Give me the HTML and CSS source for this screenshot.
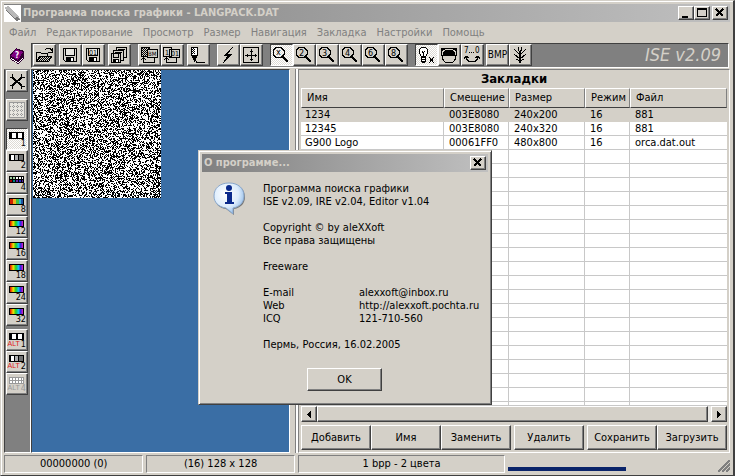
FILE: index.html
```html
<!DOCTYPE html>
<html lang="ru">
<head>
    <meta charset="UTF-8">
    <meta name="viewport" content="width=device-width, initial-scale=1.0">
    <title>Программа поиска графики - LANGPACK.DAT</title>
    <link rel="stylesheet" href="styles.css">
</head>
<body>
    <svg class="defs" aria-hidden="true">
        <defs>
            <symbol id="lens" viewBox="0 0 18 18">
                <path d="M4 1.500h5l3 3v4l-3 3h-5l-3-3v-4z" fill="none" stroke="#000"/>
                <path d="M11 11l5 5" stroke="#000" stroke-width="2"/>
            </symbol>
            <symbol id="disk" viewBox="0 0 16 16">
                <path d="M1.500 1.500h13v13h-11l-2-2z" fill="#d4d0c8" stroke="#000"/>
                <path d="M3.500 1.500v7h9v-7" fill="#e8e6e0" stroke="#000"/>
                <path d="M4 10h8v5h-8z"/>
                <path d="M9 11h2v3h-2z" fill="#fff"/>
            </symbol>
            <linearGradient id="rainbow">
                <stop offset="0" stop-color="#e00000"/>
                <stop offset=".25" stop-color="#f8e000"/>
                <stop offset=".45" stop-color="#20d020"/>
                <stop offset=".65" stop-color="#10c8f0"/>
                <stop offset=".82" stop-color="#3020e0"/>
                <stop offset="1" stop-color="#e020c0"/>
            </linearGradient>
            <symbol id="spectrum" viewBox="0 0 15 7">
                <path d="M0 0h15v7h-15z"/>
                <path d="M1 1h13v5h-13z" fill="url(#rainbow)"/>
            </symbol>
            <symbol id="mono" viewBox="0 0 15 7">
                <path d="M0 0h15v7h-15z"/>
                <path d="M3 1h4v5h-4zM9 1h4v5h-4z" fill="#fff"/>
            </symbol>
            <symbol id="gray" viewBox="0 0 15 7">
                <path d="M0 0h15v7h-15z"/>
                <path d="M2 1h3v5h-3z" fill="#fff"/>
                <path d="M6 1h3v5h-3z" fill="#b0b0b0"/>
                <path d="M10 1h4v5h-4z" fill="#707070"/>
            </symbol>
            <pattern id="dots" width="2" height="2" patternUnits="userSpaceOnUse">
                <path d="M0 0h1v1h-1zM1 1h1v1h-1z"/>
            </pattern>
        </defs>
    </svg>

    <div class="window">
        <header class="titlebar">
            <svg class="app-icon" viewBox="0 0 17 17">
                <path d="M0 0h17v17h-17z" fill="#fff"/>
                <path d="M1 2l3-1 11 10 1 4-4 1-10-10z" fill="#b8b8b8"/>
                <path d="M2 5l9 9" stroke="#777"/>
                <path d="M11 13l2-2 3 4-4 1z" fill="#777"/>
            </svg>
            <h1>Программа поиска графики - LANGPACK.DAT</h1>
            <button class="caption" aria-label="Свернуть"><svg viewBox="0 0 10 10"><path d="M1 8h6v2h-6z"/></svg></button>
            <button class="caption" aria-label="Развернуть"><svg viewBox="0 0 10 10"><path d="M0 0h10v9h-10zM1 2v6h8v-6z" fill-rule="evenodd"/></svg></button>
            <button class="caption close" aria-label="Закрыть"><svg viewBox="0 0 10 10"><path d="M1 1l7 7M8 1l-7 7" stroke="#000" stroke-width="2"/></svg></button>
        </header>

        <nav class="menu">
            <a href="#">Файл</a>
            <a href="#">Редактирование</a>
            <a href="#">Просмотр</a>
            <a href="#">Размер</a>
            <a href="#">Навигация</a>
            <a href="#">Закладка</a>
            <a href="#">Настройки</a>
            <a href="#">Помощь</a>
        </nav>

        <div class="toolrow">
            <button class="help" aria-label="Справка">
                <svg viewBox="0 0 16 16">
                    <path d="M7 0l8 3v7l-6 6-8-5v-5z" fill="#300030"/>
                    <path d="M7 1l7 3-5 8-7-4z" fill="#800080"/>
                    <path d="M2 10l7 4 5-5v1l-5 5-7-4z" fill="#fff"/>
                    <text x="6" y="10" fill="#fff" font-size="8" font-weight="bold">?</text>
                </svg>
            </button>
            <div class="toolbar">
                <div class="group">
                    <button class="tool" aria-label="Открыть"><svg viewBox="0 0 18 18">
                        <path d="M1.500 15.500v-9h4l1 1h6v3" fill="none" stroke="#000"/>
                        <path d="M2 15l3-5h12l-3 5z" fill="url(#dots)" stroke="#000"/>
                        <path d="M10 4l2-2h3l2 3M17 2v4h-4" fill="none" stroke="#000"/>
                    </svg></button>
                </div>
                <div class="group">
                    <button class="tool" aria-label="Сохранить"><svg viewBox="0 0 18 18"><use href="#disk" x="1" y="1" width="16" height="16"/></svg></button>
                    <button class="tool" aria-label="Сохранить данные"><svg viewBox="0 0 18 18">
                        <use href="#disk" x="1" y="1" width="16" height="16"/>
                        <text x="5" y="9" font-size="7">01</text>
                    </svg></button>
                </div>
                <div class="group">
                    <button class="tool" aria-label="Сохранить все"><svg viewBox="0 0 18 18">
                        <path d="M6.500 1.500h10v10h-10z" fill="#d4d0c8" stroke="#000"/>
                        <path d="M3.500 4.500h10v10h-10z" fill="#d4d0c8" stroke="#000"/>
                        <path d="M8 3.500h7M5 6.500h7" stroke="#000"/>
                        <path d="M1.500 7.500h9v9h-9z" fill="#d4d0c8" stroke="#000"/>
                        <path d="M3.500 8v3h5v-3" fill="none" stroke="#000"/>
                        <path d="M3 13h6v4h-6z"/>
                        <path d="M6 14h2v2h-2z" fill="#fff"/>
                    </svg></button>
                </div>
                <div class="group wide">
                    <button class="tool" aria-label="Экспорт BMP"><svg viewBox="0 0 18 18">
                        <path d="M1.500 1.500h8v9h-8z" fill="url(#dots)" stroke="#000"/>
                        <path d="M7.500 3.500h10v8h-10z" fill="#d4d0c8" stroke="#000"/>
                        <text x="8" y="10" font-size="6">BM</text>
                        <path d="M14.500 12v4h-11v-4M1 14l2.500-2.500 2.500 2.500" fill="none" stroke="#000"/>
                    </svg></button>
                    <button class="tool" aria-label="Экспорт данных"><svg viewBox="0 0 18 18">
                        <path d="M.5 1.500h8v9h-8zM6.500 3.500h10v8h-10z" fill="#d4d0c8" stroke="#000"/>
                        <text x="2" y="9" font-size="7">1</text>
                        <text x="8" y="10" font-size="7">01</text>
                        <path d="M13.500 12v4h-10v-4M1 14l2.500-2.500 2.500 2.500" fill="none" stroke="#000"/>
                    </svg></button>
                </div>
                <div class="group">
                    <button class="tool" aria-label="Редактор"><svg viewBox="0 0 18 18">
                        <path d="M2.500 1.500h6v7l-3 6-3-6z" fill="#fff" stroke="#000"/>
                        <path d="M3 2h3v6h-3z" fill="url(#dots)"/>
                        <path d="M3 9h5l-2 6h-1z"/>
                        <path d="M6 14l2 2.500h8" fill="none" stroke="#000"/>
                    </svg></button>
                </div>
                <div class="group wide">
                    <button class="tool" aria-label="Обновить"><svg viewBox="0 0 18 18"><path d="M13 1l-9 9h4l-4 7 10-9h-5l5-7z"/></svg></button>
                    <button class="tool" aria-label="Размер"><svg viewBox="0 0 18 18">
                        <path d="M1.500 1.500h15v15h-15zM9.500 3v12M3 9.500h12M8 5h3M8 13.500h3M5.500 8v3M13.500 8v3" fill="none" stroke="#000"/>
                    </svg></button>
                </div>
                <div class="group wide">
                    <button class="tool on" aria-label="Масштаб x"><svg viewBox="0 0 18 18"><use href="#lens" width="18" height="18"/><text x="4" y="9" font-size="9">x</text></svg></button>
                    <button class="tool" aria-label="Масштаб 2"><svg viewBox="0 0 18 18"><use href="#lens" width="18" height="18"/><text x="4" y="10" font-size="9">2</text></svg></button>
                    <button class="tool" aria-label="Масштаб 3"><svg viewBox="0 0 18 18"><use href="#lens" width="18" height="18"/><text x="4" y="10" font-size="9">3</text></svg></button>
                    <button class="tool" aria-label="Масштаб 4"><svg viewBox="0 0 18 18"><use href="#lens" width="18" height="18"/><text x="4" y="10" font-size="9">4</text></svg></button>
                    <button class="tool" aria-label="Масштаб 6"><svg viewBox="0 0 18 18"><use href="#lens" width="18" height="18"/><text x="4" y="10" font-size="9">6</text></svg></button>
                    <button class="tool" aria-label="Масштаб 8"><svg viewBox="0 0 18 18"><use href="#lens" width="18" height="18"/><text x="4" y="10" font-size="9">8</text></svg></button>
                </div>
                <div class="group wide">
                    <button class="tool on" aria-label="Подсветка"><svg viewBox="0 0 18 18">
                        <path d="M4.500 1.500h4l2 2v4l-2 3h-4l-2-3v-4z" fill="#fff" stroke="#000"/>
                        <path d="M5 5l1.500 2 1.500-2M6.500 7v4" fill="none" stroke="#000"/>
                        <path d="M4 11h5v5h-1v1h-3v-1h-1z"/>
                        <path d="M5 12h3v1h-3zM5 14h3v1h-3z" fill="#fff"/>
                        <path d="M12 11l5 6M17 11l-5 6" stroke="#000"/>
                    </svg></button>
                    <button class="tool" aria-label="Инверсия"><svg viewBox="0 0 18 18">
                        <path d="M1 2h16v8h-16z"/>
                        <path d="M2 9q0-6 7-6t7 6q0 8-7 8t-7-8z" fill="#d4d0c8" stroke="#000"/>
                        <path d="M2 10v-1q0-6 7-6t7 6v1z"/>
                        <path d="M2 9q0-6 7-6t7 6" fill="none" stroke="#d4d0c8"/>
                    </svg></button>
                    <button class="tool" aria-label="Порядок бит"><svg viewBox="0 0 18 18">
                        <text x="1" y="7" font-size="8">7</text>
                        <text x="12" y="7" font-size="8">0</text>
                        <path d="M6 6h1v1h-1zM8 6h1v1h-1zM10 6h1v1h-1z"/>
                        <path d="M3 11q1 5 6 5t6-5M1 13l2-3 3 2M12 12l3-2 2 3" fill="none" stroke="#000"/>
                    </svg></button>
                </div>
                <div class="group tight">
                    <button class="tool bmp">BMP</button>
                    <button class="tool" aria-label="Дерево"><svg viewBox="0 0 18 18">
                        <path d="M9 8v9" stroke="#000" stroke-width="2"/>
                        <path d="M3 3l6 6M15 3l-6 6M7 1l2 7M11 1l-2 7M3 8l6 5 6-5M5 13h1l3 3 3-3h1" fill="none" stroke="#000"/>
                    </svg></button>
                </div>
                <span class="brand">ISE v2.09</span>
            </div>
        </div>

        <main>
            <aside class="modes">
                <button class="tool" aria-label="Настройки"><svg viewBox="0 0 18 18">
                    <path d="M4 5l10 9M4 14l10-9" stroke="#000" stroke-width="2"/>
                    <path d="M4.500 2v3.500h-3M13.500 2v3.500h3M13.500 17v-3h3M1.500 13.500h3v3" fill="none" stroke="#000"/>
                </svg></button>
                <button class="tool gap" aria-label="Сетка" disabled><svg viewBox="0 0 18 18">
                    <path d="M1.500 1.500h15v15h-15z" fill="#e8e6e0" stroke="#999"/>
                    <path d="M5.500 2v14M9.500 2v14M13.500 2v14M2 5.500h14M2 9.500h14M2 13.500h14" stroke="#999" stroke-dasharray="1 1"/>
                </svg></button>
                <button class="tool mode on gap"><svg viewBox="0 0 15 7"><use href="#mono"/></svg><span>1</span></button>
                <button class="tool mode"><svg viewBox="0 0 15 7"><use href="#gray"/></svg><span>2</span></button>
                <button class="tool mode"><svg viewBox="0 0 15 7">
                    <path d="M0 0h15v7h-15z"/>
                    <path d="M1 1h2v2h-2zM4 1h2v2h-2z" fill="#a0d0a0"/>
                    <path d="M7 1h2v2h-2zM10 1h2v2h-2zM13 1h1v2h-1z" fill="#fff"/>
                    <path d="M1 4h2v2h-2z" fill="#a00000"/>
                    <path d="M4 4h2v2h-2z" fill="#008080"/>
                    <path d="M7 4h2v2h-2zM13 4h1v2h-1z" fill="#6020a0"/>
                    <path d="M10 4h2v2h-2z" fill="#2020c0"/>
                </svg><span>4</span></button>
                <button class="tool mode"><svg viewBox="0 0 15 7">
                    <path d="M0 0h15v7h-15z"/>
                    <path d="M1 1h3v5h-3z" fill="#d02000"/>
                    <path d="M4 1h3v5h-3z" fill="#f0b020"/>
                    <path d="M7 1h3v5h-3z" fill="#40c040"/>
                    <path d="M10 1h2v5h-2z" fill="#30b0d0"/>
                    <path d="M12 1h2v5h-2z" fill="#2050a0"/>
                </svg><span>8</span></button>
                <button class="tool mode"><svg viewBox="0 0 15 7"><use href="#spectrum"/></svg><span>12</span></button>
                <button class="tool mode"><svg viewBox="0 0 15 7"><use href="#spectrum"/></svg><span>16</span></button>
                <button class="tool mode"><svg viewBox="0 0 15 7"><use href="#spectrum"/></svg><span>18</span></button>
                <button class="tool mode"><svg viewBox="0 0 15 7"><use href="#spectrum"/></svg><span>24</span></button>
                <button class="tool mode"><svg viewBox="0 0 15 7"><use href="#spectrum"/></svg><span>32</span></button>
                <button class="tool mode small-gap"><svg viewBox="0 0 15 7"><use href="#mono"/></svg><span><b>ALT</b>1</span></button>
                <button class="tool mode"><svg viewBox="0 0 15 7"><use href="#gray"/></svg><span><b>ALT</b>2</span></button>
                <button class="tool mode" disabled><svg viewBox="0 0 15 7">
                    <path d="M0 0h15v7h-15z" fill="#999"/>
                    <path d="M1 1h2v2h-2zM4 1h2v2h-2zM7 1h2v2h-2zM10 1h2v2h-2zM13 1h1v2h-1zM1 4h2v2h-2zM4 4h2v2h-2zM7 4h2v2h-2zM10 4h2v2h-2zM13 4h1v2h-1z" fill="#fff"/>
                </svg><span><b>ALT</b>4</span></button>
            </aside>

            <section class="view">
                <canvas id="bitmap" width="128" height="128"></canvas>
            </section>

            <section class="bookmarks">
                <h2>Закладки</h2>
                <div class="list">
                    <table>
                        <thead>
                            <tr>
                                <th class="name">Имя</th>
                                <th class="offset">Смещение</th>
                                <th class="size">Размер</th>
                                <th class="bits">Режим</th>
                                <th>Файл</th>
                            </tr>
                        </thead>
                        <tbody>
                            <tr class="selected"><td>1234</td><td>003E8080</td><td>240x200</td><td>16</td><td>881</td></tr>
                            <tr><td>12345</td><td>003E8080</td><td>240x320</td><td>16</td><td>881</td></tr>
                            <tr><td>G900 Logo</td><td>00061FF0</td><td>480x800</td><td>16</td><td>orca.dat.out</td></tr>
                            <tr class="empty"><td></td><td></td><td></td><td></td><td></td></tr>
                        </tbody>
                    </table>
                </div>
                <div class="scroll">
                    <button aria-label="Влево"><svg viewBox="0 0 4 7"><path d="M4 0v7l-4-3.500z"/></svg></button>
                    <div class="thumb"></div>
                    <button aria-label="Вправо"><svg viewBox="0 0 4 7"><path d="M0 0v7l4-3.500z"/></svg></button>
                </div>
                <div class="actions">
                    <button>Добавить</button>
                    <button>Имя</button>
                    <button>Заменить</button>
                    <button class="apart">Удалить</button>
                    <button class="apart">Сохранить</button>
                    <button>Загрузить</button>
                </div>
            </section>
        </main>

        <footer class="status">
            <span class="cell address">00000000 (0)</span>
            <span class="cell dims">(16) 128 x 128</span>
            <span class="cell depth">1 bpp - 2 цвета</span>
            <span class="progress"></span>
            <svg class="grip" viewBox="0 0 12 12">
                <path d="M0 12L12 0M4 12l8-8M8 12l4-4" stroke="#808080" stroke-width="2"/>
            </svg>
        </footer>
    </div>

    <div class="dialog" role="dialog" aria-labelledby="about">
        <header class="titlebar">
            <h1 id="about">О программе...</h1>
            <button class="caption" aria-label="Закрыть"><svg viewBox="0 0 10 10"><path d="M1 1l7 7M8 1l-7 7" stroke="#000" stroke-width="2"/></svg></button>
        </header>
        <div class="about">
            <svg class="info" viewBox="0 0 32 34">
                <defs>
                    <radialGradient id="bubble" cx=".4" cy=".35" r=".7">
                        <stop offset="0" stop-color="#fff"/>
                        <stop offset=".6" stop-color="#dcecfc"/>
                        <stop offset="1" stop-color="#88b4e4"/>
                    </radialGradient>
                </defs>
                <path d="M17 2c9 0 15 5 15 13 0 6-4 11-11 12v6l-8-6C5 26 2 21 2 15 2 7 8 2 17 2z" fill="#777"/>
                <path d="M16 1c9 0 15 5 15 13 0 6-4 11-11 12v6l-7-6C5 25 1 20 1 14 1 6 7 1 16 1z" fill="url(#bubble)" stroke="#8aa8cc"/>
                <circle cx="16" cy="6" r="3" fill="#0a2a8c"/>
                <path d="M12 10h7v10h2v2h-9v-2h2v-8h-2z" fill="#0a2a8c"/>
            </svg>
            <div class="info-text">
                <p>Программа поиска графики<br>ISE v2.09, IRE v2.04, Editor v1.04</p>
                <p>Copyright © by aleXXoft<br>Все права защищены</p>
                <p>Freeware</p>
                <dl>
                    <dt>E-mail</dt><dd>alexxoft@inbox.ru</dd>
                    <dt>Web</dt><dd>http://alexxoft.pochta.ru</dd>
                    <dt>ICQ</dt><dd>121-710-560</dd>
                </dl>
                <p>Пермь, Россия, 16.02.2005</p>
            </div>
        </div>
        <button class="ok">OK</button>
    </div>

    <script src="bitmap.js"></script>
</body>
</html>
```
FILE: styles.css
```css
*{
    margin: 0;
    padding: 0;
    box-sizing: border-box;
}
body{
    height: 100vh;
    background: #404040;
    color: #000;
    font: 11px/13px "DejaVu Sans Condensed", "DejaVu Sans", sans-serif;
}
button{
    font: inherit;
    color: inherit;
    background: #d4d0c8;
    border: 1px solid;
    border-color: #fff #404040 #404040 #fff;
    box-shadow: inset -1px -1px #808080;
}
svg{
    display: block;
    shape-rendering: crispEdges;
}
.defs{
    position: absolute;
    width: 0;
    height: 0;
}
.window{
    display: flex;
    flex-direction: column;
    height: 100%;
    padding: 2px 3px 2px 2px;
    background: #d4d0c8;
    border: 1px solid;
    border-color: #d4d0c8 #404040 #404040 #d4d0c8;
    border-width: 1px 2px 1px 1px;
    box-shadow: inset 1px 1px #fff;
}

/* заголовок */
.titlebar{
    display: flex;
    align-items: center;
    height: 18px;
    margin: 1px 0 0 1px;
    padding-right: 2px;
    background: linear-gradient(to right, #808080, #c0c0c0);
}
.titlebar h1{
    flex: 1;
    padding-left: 2px;
    color: #d4d0c8;
    font-size: 11px;
    line-height: 18px;
    white-space: nowrap;
}
.app-icon{
    width: 17px;
    height: 17px;
}
.caption{
    width: 16px;
    height: 14px;
    padding: 1px 2px;
}
.caption svg{
    width: 10px;
    height: 10px;
}
.close{
    margin-left: 2px;
}

/* меню */
.menu{
    display: flex;
    gap: 10px;
    height: 21px;
    padding-left: 6px;
    line-height: 21px;
}
.menu a{
    color: #808080;
    text-decoration: none;
}

/* панель инструментов */
.toolrow{
    display: flex;
    height: 25px;
    margin-right: 1px;
}
.help{
    width: 28px;
    padding: 0 0 0 6px;
    border: none;
    box-shadow: none;
}
.help svg{
    width: 16px;
    height: 16px;
}
.toolbar{
    flex: 1;
    display: flex;
    padding-left: 1px;
    background: #808080;
    border: 1px solid;
    border-color: #404040 #fff #fff #404040;
}
.group{
    display: flex;
    margin-right: 3px;
}
.wide{
    margin-left: 4px;
}
.tight{
    margin-left: -1px;
}
.tool{
    flex: none;
    width: 23px;
    height: 22px;
    padding: 1px;
}
.tool svg{
    width: 18px;
    height: 18px;
}
.on{
    background: repeating-conic-gradient(#fff 0 25%, #dedbd5 0 50%) 0 0 / 2px 2px;
    border-color: #404040 #fff #fff #404040;
    box-shadow: none;
}
.bmp{
    font: 10px/18px "DejaVu Sans Condensed", sans-serif;
    padding: 0;
}
.brand{
    margin-left: auto;
    padding-right: 7px;
    color: #d4d0c8;
    font-size: 18px;
    font-style: italic;
    line-height: 22px;
}

/* рабочая область */
main{
    flex: 1;
    display: flex;
    min-height: 0;
    margin: 1px 0 2px 1px;
}
.modes{
    display: flex;
    flex-direction: column;
    width: 27px;
    padding: 0 0 0 1px;
    background: #808080;
    border: 1px solid;
    border-color: #808080 #fff #fff #404040;
}
.modes .tool{
    width: 22px;
}
.modes .gap{
    margin-top: 7px;
}
.modes .small-gap{
    margin-top: 3px;
}
.mode{
    padding: 0 1px 0 2px;
}
.mode svg{
    width: 15px;
    height: 7px;
}
.mode span{
    display: flex;
    justify-content: flex-end;
    gap: 1px;
    font-size: 9px;
    line-height: 8px;
}
.mode b{
    color: #e02020;
    font: 7px/8px "Liberation Sans", sans-serif;
}
.mode:disabled, .mode:disabled b{
    color: #999;
}
.view{
    flex: 259 1 0;
    padding: 0 0 0 1px;
    background: #3a6ea5;
    border: 1px solid;
    border-color: #404040 #fff #fff #404040;
}
#bitmap{
    display: block;
}
.bookmarks{
    flex: 431 1 0;
    display: flex;
    flex-direction: column;
    margin-left: 8px;
    padding: 0 2px 2px;
    border: 1px solid;
    border-color: #808080 #fff #fff #808080;
    box-shadow: -2px 0 #fff, -3px 0 #808080;
}
.bookmarks h2{
    font-size: 13px;
    line-height: 18px;
    text-align: center;
}
.list{
    flex: 1;
    background: #fff;
}
table{
    width: 100%;
    height: 100%;
    table-layout: fixed;
    border-spacing: 0;
}
th{
    height: 20px;
    padding: 0 0 2px 5px;
    background: #d4d0c8;
    border: 1px solid;
    border-color: #fff #808080 #404040 #fff;
    font-weight: normal;
    text-align: left;
}
td{
    height: 14px;
    padding-left: 5px;
    border: solid #c8c8c8;
    border-width: 0 1px 1px 0;
    line-height: 13px;
}
.name{
    width: 143px;
}
.offset{
    width: 65px;
}
.size{
    width: 76px;
}
.bits{
    width: 45px;
}
td:first-child{
    padding-left: 4px;
}
td:last-child{
    border-right: none;
}
.selected td{
    background: #d4d0c8;
    border-color: #d4d0c8;
}
.empty td{
    height: auto;
    background: repeating-linear-gradient(#fff 0 13px, #c8c8c8 13px 14px);
}
.scroll{
    display: flex;
    height: 16px;
    background: #e9e7e3;
}
.scroll button{
    display: flex;
    align-items: center;
    justify-content: center;
    width: 16px;
}
.scroll svg{
    width: 4px;
    height: 7px;
}
.thumb{
    flex: 1;
    margin-right: 3px;
    background: #d4d0c8;
    border: 1px solid;
    border-color: #fff #404040 #404040 #fff;
    box-shadow: inset -1px -1px #808080;
}
.actions{
    display: flex;
    margin-top: 3px;
}
.actions button{
    flex: 1;
    height: 25px;
}
.actions .apart{
    margin-left: 3px;
}

/* строка состояния */
.status{
    display: flex;
    gap: 3px;
    height: 18px;
    padding-left: 1px;
}
.cell{
    border: 1px solid;
    border-color: #808080 #fff #fff #808080;
    line-height: 16px;
    text-align: center;
}
.address{
    flex: 139 1 0;
}
.dims{
    flex: 148 1 0;
}
.depth{
    flex: 208 1 0;
}
.progress{
    flex: 119 1 0;
    align-self: flex-end;
    height: 4px;
    margin-bottom: 2px;
    background: #0a246a;
}
.grip{
    flex: none;
    width: 12px;
    height: 12px;
    margin: 5px 0 0 89px;
}

/* окно "О программе" */
.dialog{
    position: absolute;
    top: 150px;
    left: 198px;
    width: 294px;
    padding: 2px 3px 13px 2px;
    background: #d4d0c8;
    border: 1px solid;
    border-color: #d4d0c8 #404040 #404040 #d4d0c8;
    box-shadow: inset 1px 1px #fff, inset -1px -1px #808080;
}
.about{
    display: flex;
    padding: 10px 0 0 12px;
}
.info{
    width: 32px;
    height: 34px;
    margin-right: 18px;
    shape-rendering: auto;
}
.info-text p, dl{
    margin-bottom: 13px;
    white-space: nowrap;
}
dl{
    display: grid;
    grid-template-columns: 96px auto;
}
.ok{
    display: block;
    width: 75px;
    height: 23px;
    margin: 4px auto 0;
}
```
FILE: bitmap.js
```js
var oBitmap = document.getElementById('bitmap');
var ctx = oBitmap.getContext('2d');
var seed = 2005;

function random(){
    seed = (seed * 16807) % 2147483647;
    return seed / 2147483647;
}

ctx.fillStyle = '#fff';
ctx.fillRect(0, 0, 128, 128);
ctx.fillStyle = '#000';
for(var y=0;y<128;y++){
    for(var x=0;x<128;x++){
        if(random() < 0.46){
            ctx.fillRect(x, y, 1, 1);
        }
    }
}
```
